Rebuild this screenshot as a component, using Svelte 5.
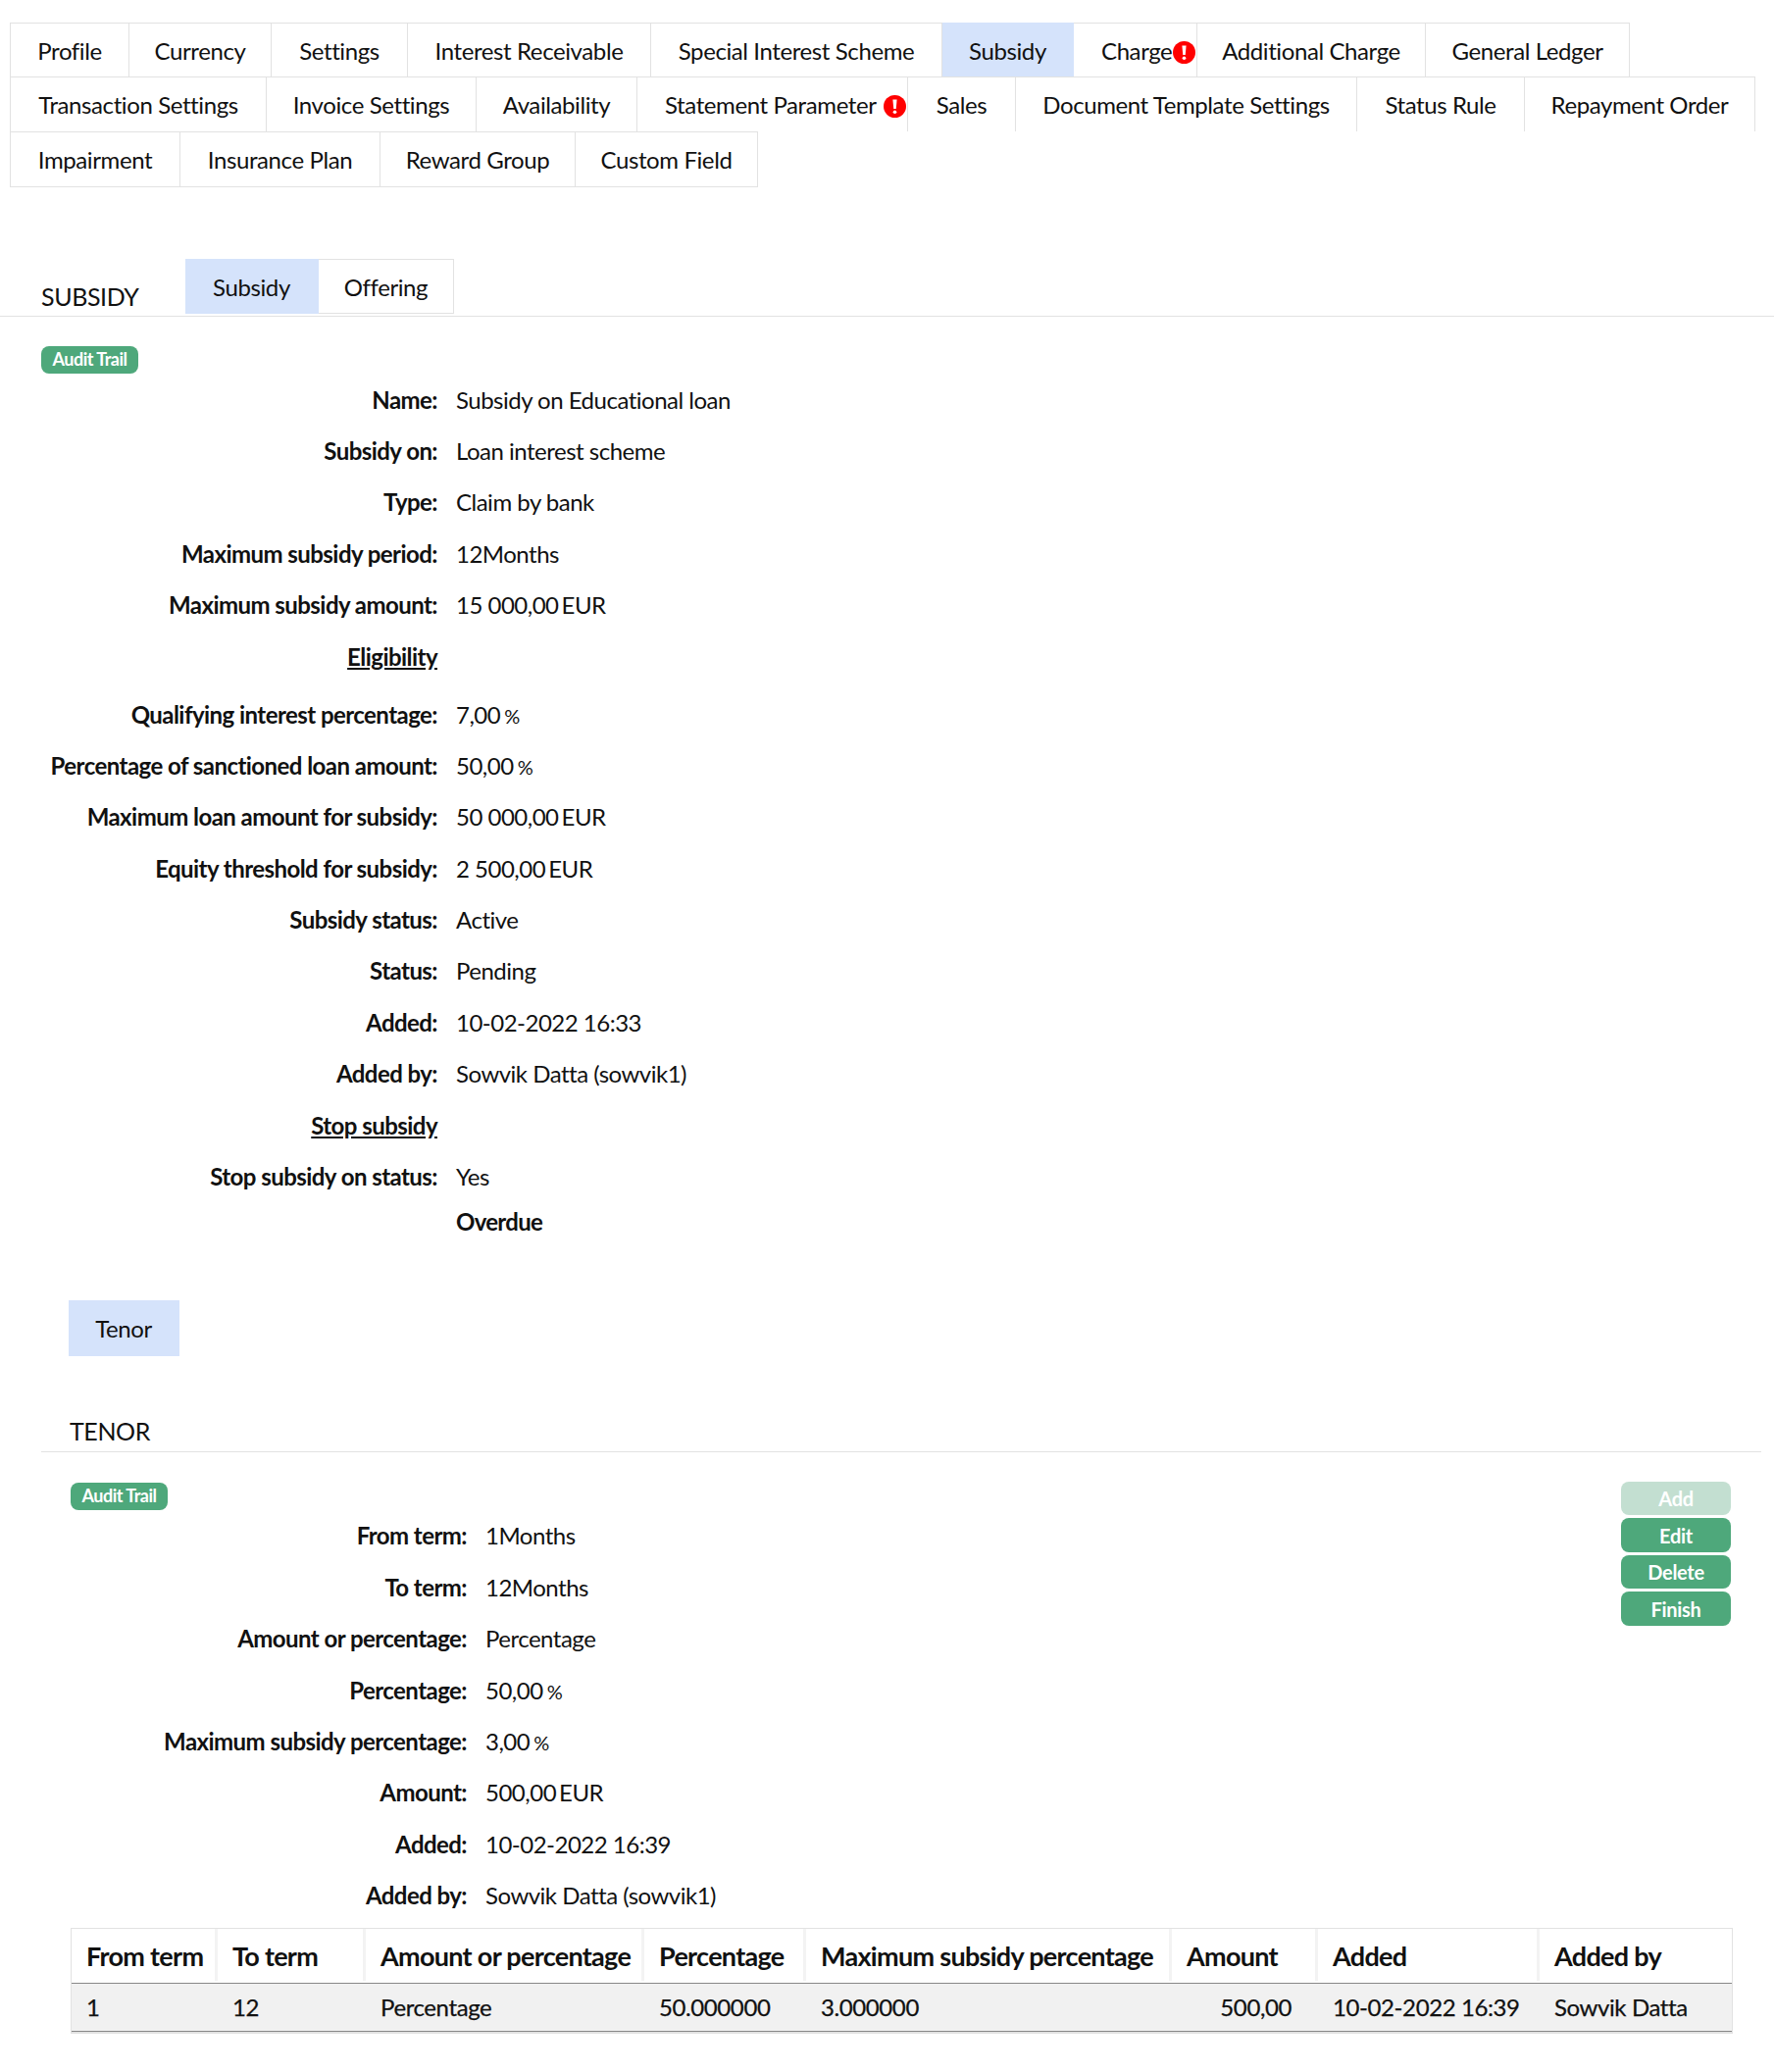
<script>
  const tabRows = [
    [
      { label: 'Profile', w: 122 },
      { label: 'Currency', w: 145 },
      { label: 'Settings', w: 139 },
      { label: 'Interest Receivable', w: 248 },
      { label: 'Special Interest Scheme', w: 297 },
      { label: 'Subsidy', w: 134, active: true },
      { label: 'Charge', w: 126, alert: true },
      { label: 'Additional Charge', w: 233 },
      { label: 'General Ledger', w: 208 }
    ],
    [
      { label: 'Transaction Settings', w: 262 },
      { label: 'Invoice Settings', w: 214 },
      { label: 'Availability', w: 164 },
      { label: 'Statement Parameter', w: 276, alert: true },
      { label: 'Sales', w: 110 },
      { label: 'Document Template Settings', w: 348 },
      { label: 'Status Rule', w: 171 },
      { label: 'Repayment Order', w: 235 }
    ],
    [
      { label: 'Impairment', w: 174 },
      { label: 'Insurance Plan', w: 204 },
      { label: 'Reward Group', w: 199 },
      { label: 'Custom Field', w: 186 }
    ]
  ];

  const subsidyFields = [
    { k: 'Name', v: 'Subsidy on Educational loan' },
    { k: 'Subsidy on', v: 'Loan interest scheme' },
    { k: 'Type', v: 'Claim by bank' },
    { k: 'Maximum subsidy period', v: '12Months' },
    { k: 'Maximum subsidy amount', v: '15 000,00', unit: 'EUR' }
  ];
  const eligibilityFields = [
    { k: 'Qualifying interest percentage', v: '7,00', unit: '%' },
    { k: 'Percentage of sanctioned loan amount', v: '50,00', unit: '%' },
    { k: 'Maximum loan amount for subsidy', v: '50 000,00', unit: 'EUR' },
    { k: 'Equity threshold for subsidy', v: '2 500,00', unit: 'EUR' },
    { k: 'Subsidy status', v: 'Active' },
    { k: 'Status', v: 'Pending' },
    { k: 'Added', v: '10-02-2022 16:33' },
    { k: 'Added by', v: 'Sowvik Datta (sowvik1)' }
  ];
  const tenorFields = [
    { k: 'From term', v: '1Months' },
    { k: 'To term', v: '12Months' },
    { k: 'Amount or percentage', v: 'Percentage' },
    { k: 'Percentage', v: '50,00', unit: '%' },
    { k: 'Maximum subsidy percentage', v: '3,00', unit: '%' },
    { k: 'Amount', v: '500,00', unit: 'EUR' },
    { k: 'Added', v: '10-02-2022 16:39' },
    { k: 'Added by', v: 'Sowvik Datta (sowvik1)' }
  ];
  const columns = [
    { label: 'From term', w: 149 },
    { label: 'To term', w: 151 },
    { label: 'Amount or percentage', w: 284 },
    { label: 'Percentage', w: 165 },
    { label: 'Maximum subsidy percentage', w: 373 },
    { label: 'Amount', w: 149, right: true },
    { label: 'Added', w: 226 },
    { label: 'Added by', w: 196 }
  ];
  const tableRow = ['1', '12', 'Percentage', '50.000000', '3.000000', '500,00', '10-02-2022 16:39', 'Sowvik Datta'];
</script>

{#snippet field(f)}
  <div class="field">
    <span class="key">{f.k}:</span>
    <span class="val">{f.v}{#if f.unit}<small class:pct={f.unit === '%'}>{f.unit}</small>{/if}</span>
  </div>
{/snippet}

<div class="page">
  <nav class="tabs">
    {#each tabRows as row}
      <div class="tab-row">
        {#each row as tab}
          <div class="tab" class:active={tab.active} class:has-alert={tab.alert} style="width: {tab.w}px">
            {tab.label}{#if tab.alert}<svg class="alert" viewBox="0 0 24 24"><circle cx="12" cy="12" r="12" fill="#f00" /><path d="M9.8 4.6h4.4l-.9 10h-2.6z" fill="#fff" /><circle cx="12" cy="18" r="1.9" fill="#fff" /></svg>{/if}
          </div>
        {/each}
      </div>
    {/each}
  </nav>

  <header class="main-head">
    <h2>SUBSIDY</h2>
    <div class="sub-tabs">
      <div class="tab active sub1">Subsidy</div>
      <div class="tab sub2">Offering</div>
    </div>
  </header>

  <section class="subsidy">
    <span class="badge">Audit Trail</span>
    {#each subsidyFields as f}
      {@render field(f)}
    {/each}
    <div class="field eligibility"><span class="key group">Eligibility</span></div>
    {#each eligibilityFields as f}
      {@render field(f)}
    {/each}
    <div class="field"><span class="key group">Stop subsidy</span></div>
    <div class="field"><span class="key">Stop subsidy on status:</span><span class="val">Yes</span></div>
    <div class="field overdue"><span class="key"></span><span class="val strong">Overdue</span></div>
  </section>

  <section class="tenor">
    <div class="tab active tenor-tab">Tenor</div>
    <h2 class="tenor-title">TENOR</h2>
    <div class="tenor-body">
      <div class="actions">
        <button disabled>Add</button>
        <button>Edit</button>
        <button>Delete</button>
        <button>Finish</button>
      </div>
      <span class="badge">Audit Trail</span>
      {#each tenorFields as f}
        {@render field(f)}
      {/each}
      <table>
        <thead>
          <tr>
            {#each columns as col}
              <th style="width: {col.w}px">{col.label}</th>
            {/each}
          </tr>
        </thead>
        <tbody>
          <tr>
            {#each tableRow as cell, i}
              <td class:right={columns[i].right}>{cell}</td>
            {/each}
          </tr>
        </tbody>
      </table>
    </div>
  </section>
</div>

<style>
  :global(body) {
    margin: 0;
    background: #fff;
  }

  .page {
    font-family: 'Lato', sans-serif;
    font-size: 24px;
    color: #111;
    letter-spacing: -0.4px;
    height: 2113px;
    overflow: hidden;
  }

  .tabs {
    padding: 23px 0 0 10px;
  }

  .tab-row {
    display: flex;
    height: 56px;
  }

  .tab-row:first-child {
    height: 55px;
  }

  .tab {
    box-sizing: border-box;
    height: 57px;
    display: flex;
    align-items: center;
    justify-content: center;
    border: 1px solid #e2e2e2;
    border-left-width: 0;
  }

  .tab-row .tab {
    height: 100%;
    border-bottom-width: 0;
  }

  .tab-row:last-child .tab {
    height: calc(100% + 1px);
    border-bottom-width: 1px;
  }

  .tab-row .tab:first-child {
    border-left-width: 1px;
  }

  .tab.active {
    background: #d5e3fb;
    border-color: #d5e3fb;
  }

  .tab.has-alert {
    justify-content: space-between;
    padding-left: 28px;
  }

  .alert {
    width: 23px;
    height: 23px;
    margin: 4px 1px 0 0;
  }

  .main-head {
    box-sizing: border-box;
    display: flex;
    align-items: flex-end;
    margin-top: 74px;
    height: 59px;
    border-bottom: 1px solid #e2e2e2;
    padding-left: 42px;
  }

  h2 {
    margin: 0;
    font-size: 25px;
    font-weight: 400;
  }

  .main-head h2 {
    width: 147px;
    padding-bottom: 5px;
  }

  .sub-tabs {
    display: flex;
    margin-bottom: 2px;
  }

  .sub1 {
    width: 136px;
    height: 56px;
  }

  .sub2 {
    width: 138px;
    height: 56px;
    border-left-width: 0;
  }

  .badge {
    display: block;
    box-sizing: border-box;
    height: 28px;
    width: 99px;
    line-height: 27px;
    text-align: center;
    border-radius: 8px;
    background: #4ea87b;
    color: #fff;
    font-size: 18px;
    font-weight: 700;
    letter-spacing: -0.5px;
  }

  .subsidy {
    padding: 30px 0 0 42px;
  }

  .field {
    display: flex;
    align-items: center;
    height: 52.4px;
    gap: 19px;
  }

  .key {
    width: 404px;
    flex: none;
    text-align: right;
    font-weight: 700;
    letter-spacing: -0.55px;
  }

  .val {
    letter-spacing: -0.5px;
  }

  .group {
    text-decoration: underline;
  }

  .eligibility {
    margin-bottom: 6.5px;
  }

  .overdue {
    margin-top: -6.4px;
  }

  .val.strong {
    font-weight: 700;
    letter-spacing: -0.7px;
  }

  small {
    font-size: inherit;
    margin-left: 3px;
  }

  small.pct {
    font-size: 20px;
    margin-left: 4px;
    letter-spacing: -1px;
  }

  .tenor {
    padding: 54px 0 0 42px;
  }

  .tenor-tab {
    width: 113px;
    height: 57px;
    margin-left: 28px;
  }

  .tenor-title {
    margin-top: 61px;
    padding-left: 29px;
    padding-bottom: 6px;
    width: 1725px;
    border-bottom: 1px solid #e2e2e2;
  }

  .tenor-body {
    position: relative;
    padding: 31px 0 0 30px;
  }

  .actions {
    position: absolute;
    top: 30px;
    left: 1611px;
    display: flex;
    flex-direction: column;
    gap: 3px;
  }

  .actions button {
    width: 112px;
    height: 34.5px;
    padding: 0;
    border: 0;
    border-radius: 8px;
    background: #4ea87b;
    color: #fff;
    font: inherit;
    font-size: 20px;
    font-weight: 700;
    letter-spacing: -0.3px;
  }

  .actions button:disabled {
    background: #c3dfd1;
  }

  table {
    box-sizing: border-box;
    width: 1695px;
    border-collapse: separate;
    border-spacing: 0;
    border: 1px solid #e2e2e2;
    border-bottom-width: 2px;
    margin-top: 7px;
    table-layout: fixed;
  }

  th {
    position: relative;
    box-sizing: border-box;
    height: 56px;
    padding: 0 15px;
    text-align: left;
    font-size: 27px;
    font-weight: 700;
    letter-spacing: -0.7px;
    border-bottom: 1px solid #888;
    white-space: nowrap;
  }

  th:not(:last-child)::after {
    content: '';
    position: absolute;
    top: 0;
    bottom: 2px;
    right: 0;
    width: 3px;
    background: #f3f3f3;
  }

  td {
    box-sizing: border-box;
    height: 49px;
    padding: 0 15px;
    background: #f1f1f1;
    border-bottom: 1px solid #888;
    white-space: nowrap;
    -webkit-text-stroke: 0.25px #111;
  }

  td.right {
    text-align: right;
    padding-right: 27px;
  }
</style>
